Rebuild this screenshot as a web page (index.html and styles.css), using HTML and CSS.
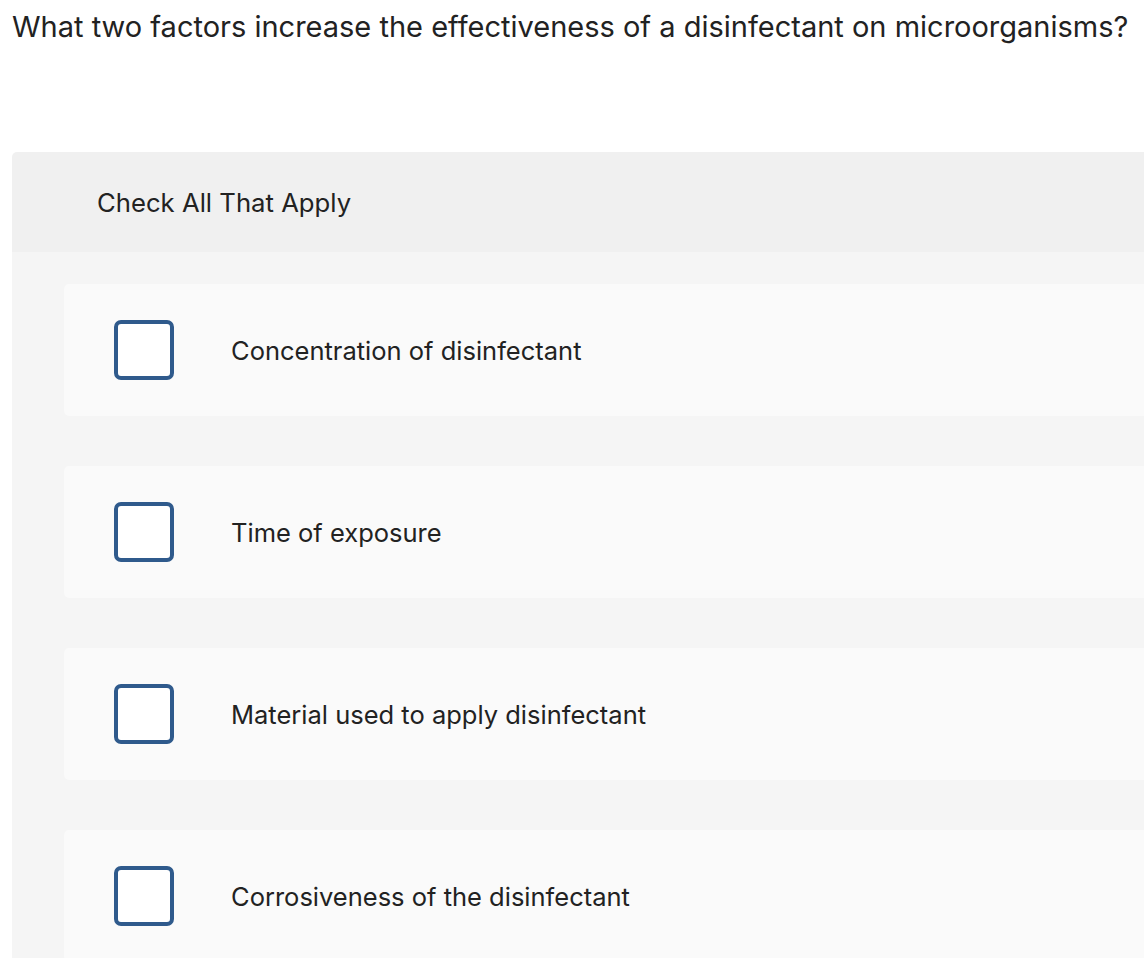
FILE: index.html
```html
<!DOCTYPE html>
<html>
<head>
<meta charset="utf-8">
<link rel="stylesheet" href="styles.css">
</head>
<body>
<div class="page">
  <h1 class="question">What two factors increase the effectiveness of a disinfectant on microorganisms?</h1>
  <div class="panel">
    <div class="panel-head">Check All That Apply</div>
    <div class="panel-body">
      <label class="option"><span class="box"></span><span class="label">Concentration of disinfectant</span></label>
      <label class="option"><span class="box"></span><span class="label">Time of exposure</span></label>
      <label class="option"><span class="box"></span><span class="label">Material used to apply disinfectant</span></label>
      <label class="option"><span class="box"></span><span class="label">Corrosiveness of the disinfectant</span></label>
    </div>
  </div>
</div>
</body>
</html>
```
FILE: styles.css
```css
html, body {
  margin: 0;
  padding: 0;
  background: #ffffff;
  overflow: hidden;
}
body {
  font-family: Inter, "Open Sans", sans-serif;
  color: #222222;
}
.page {
  width: 1300px;
  padding-left: 12px;
}
.question {
  margin: 0;
  padding-top: 8px;
  height: 152px;
  box-sizing: border-box;
  font-size: 29px;
  font-weight: 400;
  line-height: 38px;
  white-space: nowrap;
}
.panel {
  width: 1250px;
  border-radius: 5px 0 0 0;
  overflow: hidden;
}
.panel-head {
  height: 100px;
  background: #f0f0f0;
  display: flex;
  align-items: center;
  padding-left: 85px;
  font-size: 25.7px;
}
.panel-body {
  background: #f5f5f5;
  padding: 32px 0 60px 52px;
  display: flex;
  flex-direction: column;
  gap: 50px;
}
.option {
  height: 132px;
  background: #fafafa;
  border-radius: 5px 0 0 5px;
  display: flex;
  align-items: center;
  padding-left: 50px;
}
.box {
  width: 60px;
  height: 60px;
  box-sizing: border-box;
  border: 4px solid #2f5a8c;
  border-radius: 7px;
  background: #ffffff;
  flex: none;
}
.label {
  margin-left: 57px;
  font-size: 25.5px;
}
```
